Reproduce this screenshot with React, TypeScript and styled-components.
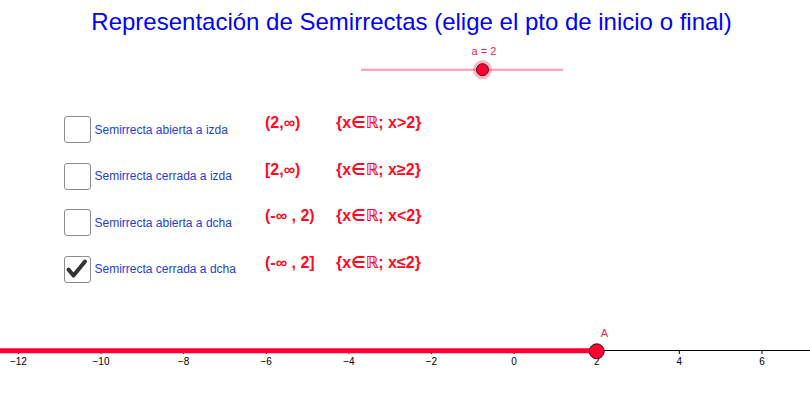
import React from "react";
import styled, { createGlobalStyle } from "styled-components";

const GlobalStyle = createGlobalStyle`
  html, body {
    margin: 0;
    padding: 0;
    background: #ffffff;
  }
  body {
    font-family: "Liberation Sans", Arial, sans-serif;
  }
`;

const Canvas = styled.div`
  width: 810px;
  height: 400px;
  box-sizing: border-box;
  padding: 10px 0 30px;
  display: flex;
  flex-direction: column;
  overflow: hidden;
  background: #ffffff;
`;

const Header = styled.header`
  display: flex;
  justify-content: center;
  padding-left: 13px;
`;

const Title = styled.h1`
  margin: 0;
  font-family: "Liberation Sans", Arial, sans-serif;
  font-weight: normal;
  font-size: 24px;
  line-height: 1;
  color: #0000ff;
  white-space: nowrap;
`;

const SliderWrap = styled.div`
  margin: 10px 0 0 355px;
  width: 215px;
  display: flex;
  flex-direction: column;
`;

const SliderLabel = styled.span`
  margin-top: 2px;
  padding-left: 43px;
  text-align: center;
  font-size: 11px;
  line-height: 1;
  color: #ff2050;
  white-space: nowrap;
`;

const Rows = styled.div`
  margin-top: 33px;
  padding-left: 63.5px;
  display: grid;
  grid-template-columns: 201.5px 71px auto;
  grid-auto-rows: 27px;
  row-gap: 19.6px;
  align-items: start;
`;

const Option = styled.label`
  display: flex;
  align-items: center;
  gap: 4px;
  height: 27px;
`;

const Box = styled.span`
  flex: none;
  width: 27px;
  height: 27px;
  box-sizing: border-box;
  border: 1.5px solid #8c8c8c;
  border-radius: 3px;
  background: #ffffff;
  display: flex;
  align-items: center;
  justify-content: center;
`;

const BoxLabel = styled.span`
  font-size: 12px;
  line-height: 1;
  color: #1f40e0;
  white-space: nowrap;
`;

const Formula = styled.span`
  margin-top: -1px;
  font-family: "Liberation Sans", "DejaVu Sans", sans-serif;
  font-weight: bold;
  font-size: 16px;
  line-height: 1;
  color: #ff0a24;
  white-space: nowrap;
`;

const AxisSvg = styled.svg`
  margin-top: auto;
  display: block;
  flex: none;
`;

const AxisText = styled.text`
  font-family: "Liberation Sans", Arial, sans-serif;
  font-size: 10px;
  fill: #000000;
`;

const PointLabel = styled.text`
  font-family: "Liberation Sans", Arial, sans-serif;
  font-size: 11px;
  fill: #ff2050;
`;

type Row = {
  text: string;
  interval: string;
  set: string;
  checked?: boolean;
};

const rows: Row[] = [
  { text: "Semirrecta abierta a izda", interval: "(2,∞)", set: "{x∈ℝ; x>2}" },
  { text: "Semirrecta cerrada a izda", interval: "[2,∞)", set: "{x∈ℝ; x≥2}" },
  { text: "Semirrecta abierta a dcha", interval: "(-∞ , 2)", set: "{x∈ℝ; x<2}" },
  { text: "Semirrecta cerrada a dcha", interval: "(-∞ , 2]", set: "{x∈ℝ; x≤2}", checked: true },
];

const ORIGIN = 514.1;
const UNIT = 41.31;
const AXIS_Y = 30.5;

const Check = () => (
  <svg width="24" height="24" viewBox="0 0 24 24">
    <polyline
      points="3.5,12.5 8.5,18.5 20,4.5"
      fill="none"
      stroke="#333333"
      strokeWidth="4"
      strokeLinecap="round"
      strokeLinejoin="round"
    />
  </svg>
);

const Slider = () => (
  <SliderWrap>
    <SliderLabel>a = 2</SliderLabel>
    <svg width="215" height="26" viewBox="0 0 215 26">
      <line x1="6" y1="12.7" x2="208" y2="12.7" stroke="#ff9aab" strokeWidth="2" />
      <circle cx="127.5" cy="12.7" r="9.5" fill="rgba(255, 40, 80, 0.35)" />
      <circle cx="127.5" cy="12.7" r="6" fill="#ff0033" stroke="#3a1a1a" strokeWidth="1" />
    </svg>
  </SliderWrap>
);

const Axis = () => {
  const ticks = [-12, -10, -8, -6, -4, -2, 0, 2, 4, 6];
  const ax = ORIGIN + 2 * UNIT;
  return (
    <AxisSvg width="810" height="50" viewBox="0 0 810 50">
      <line x1="0" y1={AXIS_Y} x2="810" y2={AXIS_Y} stroke="#000000" strokeWidth="1" />
      {ticks.map((t) => {
        const x = ORIGIN + t * UNIT;
        return (
          <g key={t}>
            <line x1={x} y1={AXIS_Y} x2={x} y2={AXIS_Y + 3.5} stroke="#000000" strokeWidth="1" />
            <AxisText x={x} y={45} textAnchor="middle">
              {t < 0 ? `−${-t}` : `${t}`}
            </AxisText>
          </g>
        );
      })}
      <line x1="0" y1={AXIS_Y + 0.3} x2={ax} y2={AXIS_Y + 0.3} stroke="#ff0033" strokeWidth="5" />
      <circle cx={ax} cy={AXIS_Y + 0.8} r="7.5" fill="#ff0033" stroke="#2a1a1a" strokeWidth="1" />
      <PointLabel x={ax + 4} y={16.5}>
        A
      </PointLabel>
    </AxisSvg>
  );
};

export default function App() {
  return (
    <>
      <GlobalStyle />
      <Canvas>
        <Header>
          <Title>Representación de Semirrectas (elige el pto de inicio o final)</Title>
        </Header>
        <Slider />
        <Rows>
          {rows.map((r) => (
            <React.Fragment key={r.text}>
              <Option>
                <Box>{r.checked && <Check />}</Box>
                <BoxLabel>{r.text}</BoxLabel>
              </Option>
              <Formula>{r.interval}</Formula>
              <Formula>{r.set}</Formula>
            </React.Fragment>
          ))}
        </Rows>
        <Axis />
      </Canvas>
    </>
  );
}
